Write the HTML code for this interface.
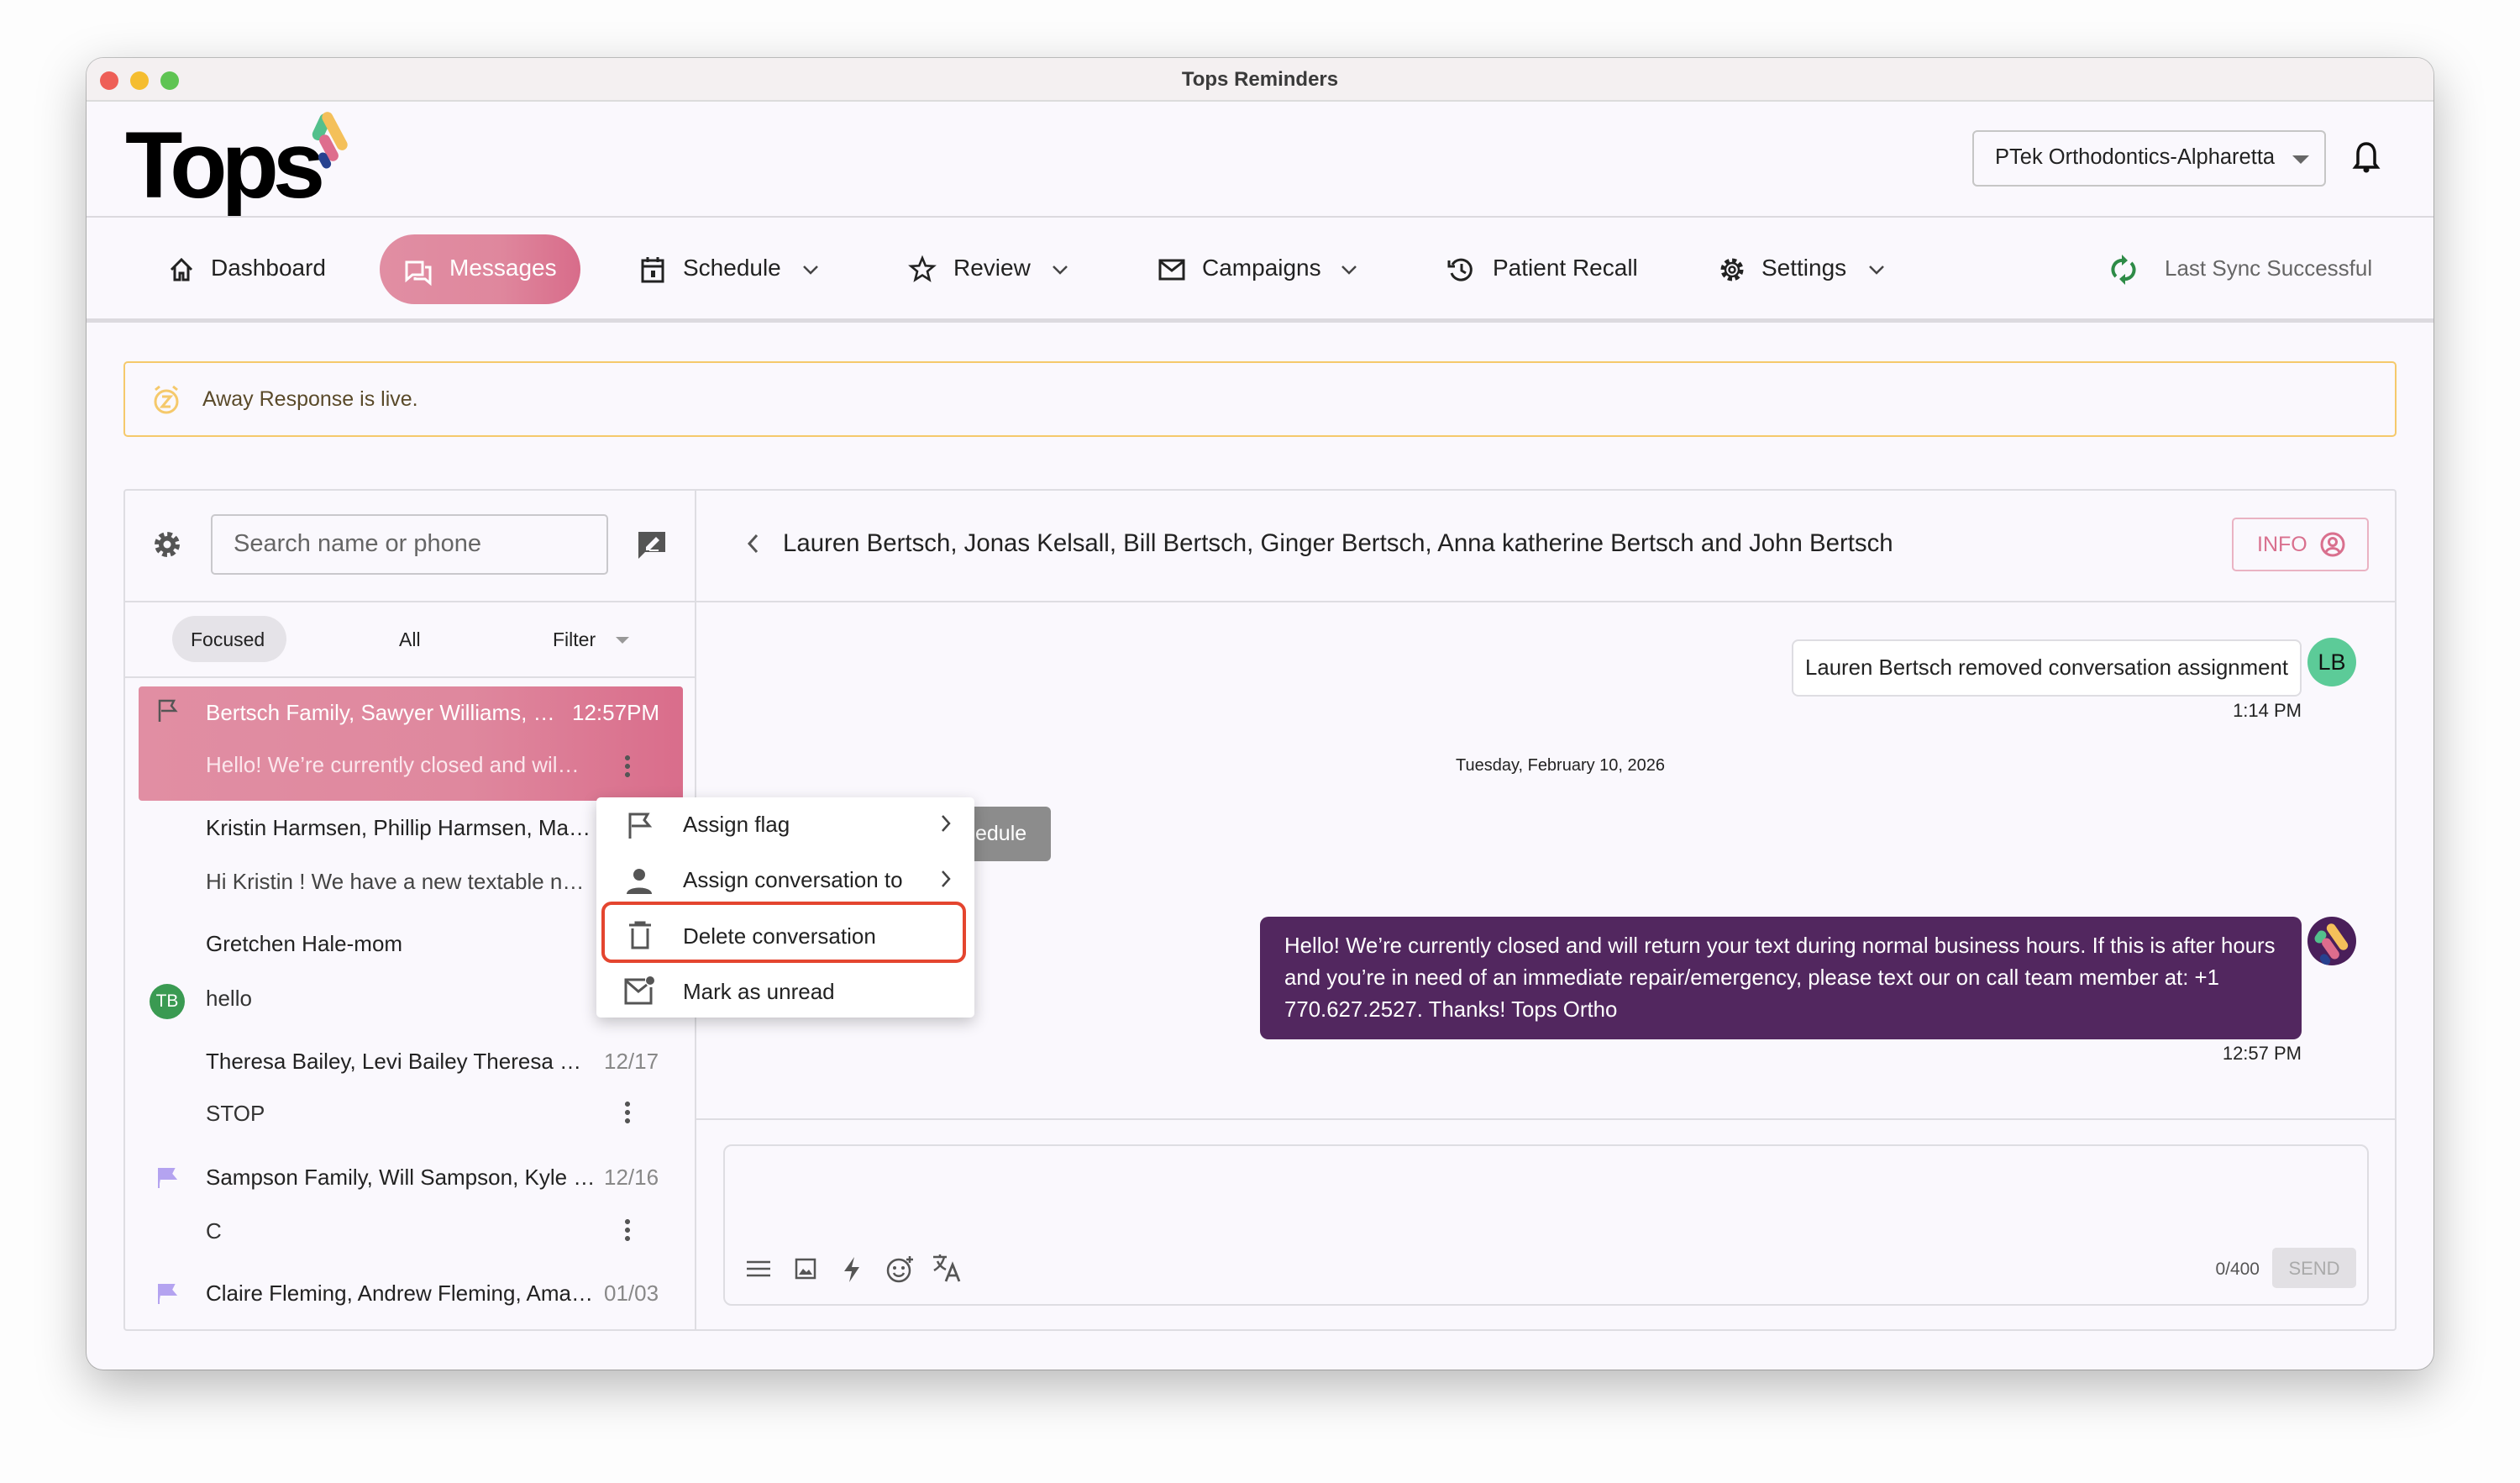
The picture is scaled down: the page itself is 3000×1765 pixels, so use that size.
<!DOCTYPE html>
<html><head><meta charset="utf-8"><style>
*{box-sizing:border-box;margin:0;padding:0}
body{width:3000px;height:1765px;background:#fdfdfd;font-family:"Liberation Sans",Arial,sans-serif;position:relative;overflow:hidden;color:#222}
.a{position:absolute}
.win{left:103px;top:69px;width:2794px;height:1561px;background:#faf8fd;border-radius:20px;overflow:hidden;box-shadow:0 20px 60px rgba(0,0,0,.28),0 0 0 1px #c8c8c8}
.t{position:absolute;white-space:nowrap}
svg{position:absolute;overflow:visible}
.nav{top:234px;font-size:28px}
</style></head><body>
<div class="a win">
 <div class="a" style="left:0;top:0;width:2794px;height:52px;background:#f4f0f1;border-bottom:2px solid #dcdcdc"></div>
 <div class="a" style="left:16px;top:16px;width:22px;height:22px;border-radius:50%;background:#ee5f57"></div>
 <div class="a" style="left:52px;top:16px;width:22px;height:22px;border-radius:50%;background:#f5bd30"></div>
 <div class="a" style="left:88px;top:16px;width:22px;height:22px;border-radius:50%;background:#5fc453"></div>
 <div class="t" style="left:1297px;top:12px;width:200px;text-align:center;font-size:24px;font-weight:bold;color:#3a3a3a">Tops Reminders</div>
 <div class="t" style="left:46px;top:58px;font-size:112px;font-weight:bold;letter-spacing:-7px;color:#000;line-height:140px">Tops</div>
 <div class="a" style="left:273px;top:65px;width:14px;height:34px;border-radius:7px;background:#53c08c;transform:rotate(25deg)"></div>
 <div class="a" style="left:289px;top:62px;width:13px;height:50px;border-radius:7px;background:#f4c05a;transform:rotate(-28deg)"></div>
 <div class="a" style="left:282px;top:90px;width:13px;height:34px;border-radius:7px;background:#de6d8d;transform:rotate(-28deg)"></div>
 <div class="a" style="left:278px;top:112px;width:11px;height:20px;border-radius:6px;background:#27418f;transform:rotate(-28deg)"></div>
 <div class="a" style="left:2245px;top:86px;width:421px;height:67px;border:2px solid #c6c6c6;border-radius:6px;background:#faf8fd"></div>
 <div class="t" style="left:2272px;top:104px;font-size:25.5px;color:#222">PTek Orthodontics-Alpharetta</div>
 <svg style="left:2626px;top:116px" width="20" height="10"><path d="M0 0L20 0L10 10Z" fill="#666"/></svg>
 <svg style="left:2699px;top:98px" width="30" height="40" viewBox="0 0 30 40"><path d="M15 4C8 4 5 10 5 16V28L2 32H28L25 28V16C25 10 22 4 15 4Z" fill="none" stroke="#111" stroke-width="3.5"/><circle cx="15" cy="35" r="3.5" fill="#111"/></svg>
 <div class="a" style="left:0;top:188px;width:2794px;height:2px;background:#dcdadf"></div>
 <svg style="left:98px;top:237px" width="30" height="30" viewBox="0 0 30 30"><path d="M3 15L15 3L27 15M7 11V27H13V19H17V27H23V11" fill="none" stroke="#222" stroke-width="3"/></svg>
 <div class="t nav" style="left:148px">Dashboard</div>
 <div class="a" style="left:349px;top:210px;width:239px;height:83px;border-radius:42px;background:linear-gradient(90deg,#e18ea3,#df879d 60%,#d86c8a)"></div>
 <svg style="left:378px;top:240px" width="34" height="32" viewBox="0 0 34 32"><path d="M3 3H22V18H10L3 24Z" fill="none" stroke="#fff" stroke-width="3"/><path d="M25 9H31V28L25 23H13V21" fill="none" stroke="#fff" stroke-width="3"/></svg>
 <div class="t nav" style="left:432px;color:#fff">Messages</div>
 <svg style="left:660px;top:236px" width="28" height="32" viewBox="0 0 28 32"><rect x="2" y="5" width="24" height="25" fill="none" stroke="#222" stroke-width="3"/><path d="M2 12H26M8 1V7M20 1V7" stroke="#222" stroke-width="3"/><rect x="12" y="17" width="5" height="8" fill="#222"/></svg>
 <div class="t nav" style="left:710px">Schedule</div>
 <svg style="left:853px;top:247px" width="18" height="11"><path d="M1 1L9 9L17 1" fill="none" stroke="#444" stroke-width="2.5"/></svg>
 <svg style="left:980px;top:236px" width="30" height="30" viewBox="0 0 30 30"><path d="M15 2L18.8 11.3L28.5 11.8L21 18L23.5 28L15 22.5L6.5 28L9 18L1.5 11.8L11.2 11.3Z" fill="none" stroke="#222" stroke-width="2.6"/></svg>
 <div class="t nav" style="left:1032px">Review</div>
 <svg style="left:1150px;top:247px" width="18" height="11"><path d="M1 1L9 9L17 1" fill="none" stroke="#444" stroke-width="2.5"/></svg>
 <svg style="left:1276px;top:239px" width="32" height="26" viewBox="0 0 32 26"><rect x="2" y="2" width="28" height="22" fill="none" stroke="#222" stroke-width="3"/><path d="M2 3L16 14L30 3" fill="none" stroke="#222" stroke-width="3"/></svg>
 <div class="t nav" style="left:1328px">Campaigns</div>
 <svg style="left:1494px;top:247px" width="18" height="11"><path d="M1 1L9 9L17 1" fill="none" stroke="#444" stroke-width="2.5"/></svg>
 <svg style="left:1620px;top:236px" width="32" height="32" viewBox="0 0 32 32"><path d="M6 10A12 12 0 1 1 5 20" fill="none" stroke="#222" stroke-width="3"/><path d="M2 5V12H9" fill="none" stroke="#222" stroke-width="3"/><path d="M17 9V17L22 20" fill="none" stroke="#222" stroke-width="3"/></svg>
 <div class="t nav" style="left:1674px">Patient Recall</div>
 <svg style="left:1943px;top:236px" width="32" height="32" viewBox="0 0 32 32"><circle cx="16" cy="16" r="11" fill="none" stroke="#222" stroke-width="5" stroke-dasharray="5 3.6"/><circle cx="16" cy="16" r="8" fill="none" stroke="#222" stroke-width="2.5"/><circle cx="16" cy="16" r="3.5" fill="none" stroke="#222" stroke-width="2.5"/></svg>
 <div class="t nav" style="left:1994px">Settings</div>
 <svg style="left:2122px;top:247px" width="18" height="11"><path d="M1 1L9 9L17 1" fill="none" stroke="#444" stroke-width="2.5"/></svg>
 <svg style="left:2408px;top:232px" width="34" height="40" viewBox="0 0 34 40"><path d="M8 28A11 11 0 0 1 17 9" fill="none" stroke="#2e8b47" stroke-width="4"/><path d="M15 2L22 9L15 15Z" fill="#2e8b47"/><path d="M26 12A11 11 0 0 1 17 31" fill="none" stroke="#2e8b47" stroke-width="4"/><path d="M19 38L12 31L19 25Z" fill="#2e8b47"/></svg>
 <div class="t" style="left:2474px;top:235px;font-size:26px;color:#666">Last Sync Successful</div>
 <div class="a" style="left:0;top:310px;width:2794px;height:5px;background:#dcdadf"></div>
 <div class="a" style="left:44px;top:361px;width:2706px;height:90px;border:2px solid #f5c96b;border-radius:5px"></div>
 <svg style="left:78px;top:389px" width="34" height="36" viewBox="0 0 34 36"><circle cx="17" cy="20" r="13" fill="none" stroke="#f5c96b" stroke-width="3"/><path d="M4 6L9 2M30 6L25 2" stroke="#f5c96b" stroke-width="3"/><path d="M12 14H22L12 26H22" fill="none" stroke="#f5c96b" stroke-width="3"/></svg>
 <div class="t" style="left:138px;top:392px;font-size:25px;color:#5a4a2a">Away Response is live.</div>
 <div class="a" style="left:44px;top:513px;width:2706px;height:1002px;border:2px solid #dedde2;border-radius:4px"></div>
 <div class="a" style="left:724px;top:513px;width:2px;height:1002px;background:#dedde2"></div>
 <div class="a" style="left:44px;top:646px;width:682px;height:2px;background:#dedde2"></div>
 <div class="a" style="left:44px;top:736px;width:682px;height:2px;background:#dedde2"></div>
 <div class="a" style="left:726px;top:646px;width:2024px;height:2px;background:#dedde2"></div>
 <div class="a" style="left:726px;top:1262px;width:2024px;height:2px;background:#dedde2"></div>
 <svg style="left:78px;top:561px" width="36" height="36" viewBox="0 0 36 36"><circle cx="18" cy="18" r="12" fill="none" stroke="#555" stroke-width="6" stroke-dasharray="5.5 3.9"/><circle cx="18" cy="18" r="10" fill="#555"/><circle cx="18" cy="18" r="4.5" fill="#faf8fd"/></svg>
 <div class="a" style="left:148px;top:543px;width:473px;height:72px;border:2px solid #c9c8cc;border-radius:5px"></div>
 <div class="t" style="left:175px;top:562px;font-size:29px;color:#666">Search name or phone</div>
 <svg style="left:655px;top:562px" width="36" height="36" viewBox="0 0 36 36"><path d="M2 2H34V26H10L2 34Z" fill="#555"/><path d="M11 20L23 8L27 12L15 24H11Z" fill="#faf8fd"/><path d="M15 24H26" stroke="#faf8fd" stroke-width="2"/></svg>
 <div class="a" style="left:102px;top:664px;width:136px;height:55px;border-radius:28px;background:#e5e3e8"></div>
 <div class="t" style="left:124px;top:679px;font-size:23px;color:#222">Focused</div>
 <div class="t" style="left:372px;top:679px;font-size:23px;color:#222">All</div>
 <div class="t" style="left:555px;top:679px;font-size:23px;color:#222">Filter</div>
 <svg style="left:630px;top:689px" width="16" height="8"><path d="M0 0H16L8 8Z" fill="#999"/></svg>
 <div class="a" style="left:62px;top:748px;width:648px;height:136px;border-radius:4px;background:linear-gradient(90deg,#e18ea3,#df889e 60%,#d96d8b)"></div>
 <svg style="left:84px;top:763px" width="26" height="28" viewBox="0 0 26 28"><path d="M3 27V2H20L17 8L22 14H5" fill="none" stroke="#555" stroke-width="2.5"/></svg>
 <div class="t" style="left:142px;top:764px;font-size:26px;color:#fff">Bertsch Family, Sawyer Williams, …</div>
 <div class="t" style="left:578px;top:764px;font-size:26px;color:#fff">12:57PM</div>
 <div class="t" style="left:142px;top:826px;font-size:26px;color:#fbe6ec">Hello! We’re currently closed and wil…</div>
 <div class="a" style="left:641px;top:828px;width:6px;height:30px;background:radial-gradient(circle,#555 2.8px,transparent 3.2px) 0 0/6px 10px"></div>
 <div class="t" style="left:142px;top:901px;font-size:26px;color:#222">Kristin Harmsen, Phillip Harmsen, Ma…</div>
 <div class="t" style="left:142px;top:965px;font-size:26px;color:#444">Hi Kristin ! We have a new textable n…</div>
 <div class="t" style="left:142px;top:1039px;font-size:26px;color:#222">Gretchen Hale-mom</div>
 <div class="a" style="left:75px;top:1102px;width:42px;height:42px;border-radius:50%;background:#3a9a52;color:#fff;font-size:21px;text-align:center;line-height:42px">TB</div>
 <div class="t" style="left:142px;top:1104px;font-size:26px;color:#333">hello</div>
 <div class="t" style="left:142px;top:1179px;font-size:26px;color:#222">Theresa Bailey, Levi Bailey Theresa …</div>
 <div class="t" style="left:616px;top:1179px;font-size:26px;color:#888">12/17</div>
 <div class="t" style="left:142px;top:1241px;font-size:26px;color:#333">STOP</div>
 <div class="a" style="left:641px;top:1240px;width:6px;height:30px;background:radial-gradient(circle,#555 2.8px,transparent 3.2px) 0 0/6px 10px"></div>
 <svg style="left:84px;top:1320px" width="24" height="26" viewBox="0 0 24 26"><path d="M2 25V2H20L17 8L22 14H4" fill="#b4a3f0" stroke="#b4a3f0" stroke-width="2"/></svg>
 <div class="t" style="left:142px;top:1317px;font-size:26px;color:#222">Sampson Family, Will Sampson, Kyle …</div>
 <div class="t" style="left:616px;top:1317px;font-size:26px;color:#888">12/16</div>
 <div class="t" style="left:142px;top:1381px;font-size:26px;color:#333">C</div>
 <div class="a" style="left:641px;top:1380px;width:6px;height:30px;background:radial-gradient(circle,#555 2.8px,transparent 3.2px) 0 0/6px 10px"></div>
 <svg style="left:84px;top:1458px" width="24" height="26" viewBox="0 0 24 26"><path d="M2 25V2H20L17 8L22 14H4" fill="#b4a3f0" stroke="#b4a3f0" stroke-width="2"/></svg>
 <div class="t" style="left:142px;top:1455px;font-size:26px;color:#222">Claire Fleming, Andrew Fleming, Ama…</div>
 <div class="t" style="left:616px;top:1455px;font-size:26px;color:#888">01/03</div>
 <div class="a" style="left:990px;top:891px;width:158px;height:65px;border-radius:6px;background:#8c8c8c"></div>
 <div class="t" style="left:1058px;top:909px;font-size:25px;color:#fff">edule</div>
 <div class="a" style="left:607px;top:880px;width:450px;height:262px;background:#fff;border-radius:5px;box-shadow:0 6px 18px rgba(0,0,0,.22)"></div>
 <svg style="left:644px;top:898px" width="30" height="32" viewBox="0 0 30 32"><path d="M3 31V2H24L20 9L26 16H5" fill="none" stroke="#555" stroke-width="3"/></svg>
 <div class="t" style="left:710px;top:897px;font-size:26px">Assign flag</div>
 <svg style="left:1017px;top:900px" width="12" height="22"><path d="M2 2L10 11L2 20" fill="none" stroke="#444" stroke-width="2.5"/></svg>
 <svg style="left:642px;top:963px" width="32" height="32" viewBox="0 0 32 32"><circle cx="16" cy="9" r="7" fill="#555"/><path d="M1 32C1 22 31 22 31 32Z" fill="#555"/></svg>
 <div class="t" style="left:710px;top:963px;font-size:26px">Assign conversation to</div>
 <svg style="left:1017px;top:966px" width="12" height="22"><path d="M2 2L10 11L2 20" fill="none" stroke="#444" stroke-width="2.5"/></svg>
 <div class="a" style="left:613px;top:1004px;width:434px;height:73px;border:4px solid #e4452f;border-radius:12px"></div>
 <svg style="left:645px;top:1028px" width="28" height="32" viewBox="0 0 28 32"><path d="M1 4H27M9 4V1H19V4M5 8V31H23V8" fill="none" stroke="#555" stroke-width="3"/></svg>
 <div class="t" style="left:710px;top:1030px;font-size:26px">Delete conversation</div>
 <svg style="left:640px;top:1093px" width="36" height="34" viewBox="0 0 36 34"><path d="M25 4H2V32H32V13" fill="none" stroke="#555" stroke-width="3"/><path d="M2 5L17 18L27 10" fill="none" stroke="#555" stroke-width="3"/><circle cx="31" cy="5" r="5" fill="#555"/></svg>
 <div class="t" style="left:710px;top:1096px;font-size:26px">Mark as unread</div>
 <svg style="left:786px;top:566px" width="14" height="24"><path d="M12 2L3 12L12 22" fill="none" stroke="#555" stroke-width="3"/></svg>
 <div class="t" style="left:829px;top:561px;font-size:29.4px;color:#222">Lauren Bertsch, Jonas Kelsall, Bill Bertsch, Ginger Bertsch, Anna katherine Bertsch and John Bertsch</div>
 <div class="a" style="left:2554px;top:547px;width:163px;height:64px;border:2px solid #eab3c3;border-radius:5px"></div>
 <div class="t" style="left:2584px;top:565px;font-size:25px;color:#d9708e">INFO</div>
 <svg style="left:2658px;top:563px" width="32" height="32" viewBox="0 0 32 32"><circle cx="16" cy="16" r="13" fill="none" stroke="#d9708e" stroke-width="3"/><circle cx="16" cy="13" r="4.5" fill="none" stroke="#d9708e" stroke-width="3"/><path d="M8 25C11 19 21 19 24 25" fill="none" stroke="#d9708e" stroke-width="3"/></svg>
 <div class="a" style="left:2030px;top:692px;width:607px;height:68px;border:2px solid #dedde2;border-radius:8px;background:#fff"></div>
 <div class="t" style="left:2046px;top:712px;font-size:25.8px;color:#222">Lauren Bertsch removed conversation assignment</div>
 <div class="a" style="left:2644px;top:690px;width:58px;height:58px;border-radius:50%;background:#5ccb98;color:#111;font-size:27px;text-align:center;line-height:58px">LB</div>
 <div class="t" style="left:2530px;top:764px;width:107px;text-align:right;font-size:22px;color:#222">1:14 PM</div>
 <div class="t" style="left:1630px;top:831px;width:200px;text-align:center;font-size:20px;color:#222">Tuesday, February 10, 2026</div>
 <div class="a" style="left:1397px;top:1022px;width:1240px;height:146px;border-radius:10px;background:#52275f"></div>
 <div class="t" style="left:1426px;top:1038px;font-size:25.8px;color:#fff;line-height:38px;white-space:normal;width:1200px">Hello! We’re currently closed and will return your text during normal business hours. If this is after hours and you’re in need of an immediate repair/emergency, please text our on call team member at: +1 770.627.2527. Thanks! Tops Ortho</div>
 <div class="a" style="left:2644px;top:1022px;width:58px;height:58px;border-radius:50%;background:#4a1f5a;overflow:hidden">
  <div class="a" style="left:10px;top:16px;width:11px;height:16px;border-radius:6px;background:#53c08c;transform:rotate(35deg)"></div>
  <div class="a" style="left:30px;top:6px;width:11px;height:36px;border-radius:6px;background:#f4c05a;transform:rotate(-35deg)"></div>
  <div class="a" style="left:22px;top:24px;width:11px;height:28px;border-radius:6px;background:#de6d8d;transform:rotate(-35deg)"></div>
  <div class="a" style="left:16px;top:44px;width:10px;height:14px;border-radius:6px;background:#27418f;transform:rotate(-35deg)"></div>
 </div>
 <div class="t" style="left:2530px;top:1172px;width:107px;text-align:right;font-size:22px;color:#222">12:57 PM</div>
 <div class="a" style="left:758px;top:1293px;width:1959px;height:192px;border:2px solid #dedde2;border-radius:10px"></div>
 <svg style="left:786px;top:1431px" width="28" height="20"><path d="M0 2H28M0 10H28M0 18H28" stroke="#555" stroke-width="2.5"/></svg>
 <svg style="left:843px;top:1428px" width="26" height="26" viewBox="0 0 26 26"><rect x="2" y="2" width="22" height="22" fill="none" stroke="#555" stroke-width="2.5"/><path d="M5 20L10 13L14 17L17 14L21 20Z" fill="#555"/></svg>
 <svg style="left:900px;top:1426px" width="22" height="32" viewBox="0 0 22 32"><path d="M14 1L2 18H11L8 31L20 13H11Z" fill="#555"/></svg>
 <svg style="left:952px;top:1425px" width="34" height="34" viewBox="0 0 34 34"><circle cx="15" cy="18" r="13" fill="none" stroke="#555" stroke-width="2.5"/><circle cx="10" cy="15" r="2" fill="#555"/><circle cx="20" cy="15" r="2" fill="#555"/><path d="M9 21C11 26 19 26 21 21" fill="none" stroke="#555" stroke-width="2.5"/><path d="M28 1V9M24 5H32" stroke="#555" stroke-width="2.5"/></svg>
 <svg style="left:1006px;top:1422px" width="36" height="36" viewBox="0 0 36 36"><path d="M2 5H18M10 2V5M15 5C13 13 8 18 3 21M7 10C9 15 13 18 17 20" fill="none" stroke="#555" stroke-width="2.5"/><path d="M17 34L25 14L33 34M20 27H30" fill="none" stroke="#555" stroke-width="2.8"/></svg>
 <div class="t" style="left:2520px;top:1430px;width:67px;text-align:right;font-size:21px;color:#555">0/400</div>
 <div class="a" style="left:2602px;top:1416px;width:100px;height:48px;border-radius:5px;background:#e2e0e4"></div>
 <div class="t" style="left:2602px;top:1428px;width:100px;text-align:center;font-size:22px;color:#aaa">SEND</div>
</div>
</body></html>
